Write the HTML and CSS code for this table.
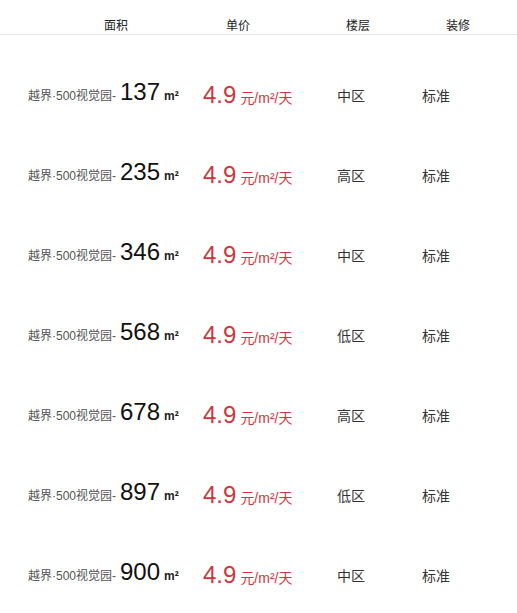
FILE: index.html
```html
<!DOCTYPE html>
<html lang="zh">
<head>
<meta charset="utf-8">
<link rel="stylesheet" href="styles.css">
</head>
<body>
<div class="head">
  <span class="h">面积</span>
  <span class="h">单价</span>
  <span class="h">楼层</span>
  <span class="h">装修</span>
</div>
<div class="list">
  <div class="row"><div class="c1"><span class="name">越界·500视觉园-</span><span class="area">137</span><span class="unit">m²</span></div><div class="c2"><span class="price">4.9</span><span class="pu">元/m²/天</span></div><div class="c3">中区</div><div class="c4">标准</div></div>
  <div class="row"><div class="c1"><span class="name">越界·500视觉园-</span><span class="area">235</span><span class="unit">m²</span></div><div class="c2"><span class="price">4.9</span><span class="pu">元/m²/天</span></div><div class="c3">高区</div><div class="c4">标准</div></div>
  <div class="row"><div class="c1"><span class="name">越界·500视觉园-</span><span class="area">346</span><span class="unit">m²</span></div><div class="c2"><span class="price">4.9</span><span class="pu">元/m²/天</span></div><div class="c3">中区</div><div class="c4">标准</div></div>
  <div class="row"><div class="c1"><span class="name">越界·500视觉园-</span><span class="area">568</span><span class="unit">m²</span></div><div class="c2"><span class="price">4.9</span><span class="pu">元/m²/天</span></div><div class="c3">低区</div><div class="c4">标准</div></div>
  <div class="row"><div class="c1"><span class="name">越界·500视觉园-</span><span class="area">678</span><span class="unit">m²</span></div><div class="c2"><span class="price">4.9</span><span class="pu">元/m²/天</span></div><div class="c3">高区</div><div class="c4">标准</div></div>
  <div class="row"><div class="c1"><span class="name">越界·500视觉园-</span><span class="area">897</span><span class="unit">m²</span></div><div class="c2"><span class="price">4.9</span><span class="pu">元/m²/天</span></div><div class="c3">低区</div><div class="c4">标准</div></div>
  <div class="row"><div class="c1"><span class="name">越界·500视觉园-</span><span class="area">900</span><span class="unit">m²</span></div><div class="c2"><span class="price">4.9</span><span class="pu">元/m²/天</span></div><div class="c3">中区</div><div class="c4">标准</div></div>
</div>
</body>
</html>
```
FILE: styles.css
```css
html, body {
  margin: 0;
  padding: 0;
  background: #fff;
  font-family: "Liberation Sans", "Noto Sans CJK SC", sans-serif;
}
.head {
  display: grid;
  grid-template-columns: 122px 120px 100px auto;
  padding: 18px 0 0 104px;
  border-bottom: 1px solid #e5e5e5;
  font-size: 12px;
  line-height: 16px;
  color: #222;
}
.list {
  padding-top: 20px;
}
.row {
  display: grid;
  grid-template-columns: 175px 134px 85px auto;
  align-items: start;
  height: 80px;
  padding-left: 28px;
}
.c1 {
  padding-top: 25px;
  line-height: 24px;
  font-size: 24px;
  white-space: nowrap;
}
.name {
  font-size: 12px;
  color: #555;
}
.area {
  font-size: 24px;
  color: #111;
  margin-left: 4px;
}
.unit {
  font-size: 12px;
  font-weight: bold;
  color: #222;
  margin-left: 4px;
}
.c2 {
  padding-top: 28px;
  line-height: 24px;
  font-size: 24px;
  color: #d0363a;
  white-space: nowrap;
}
.pu {
  font-size: 14px;
  margin-left: 4px;
}
.c3, .c4 {
  padding-top: 29px;
  font-size: 14px;
  line-height: 24px;
  color: #333;
}
```
